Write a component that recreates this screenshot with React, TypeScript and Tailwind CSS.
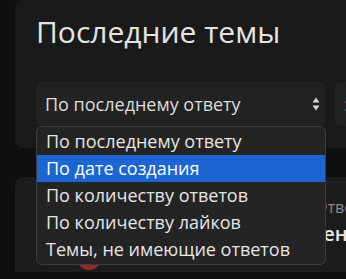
import React from "react"

const options = [
  "По последнему ответу",
  "По дате создания",
  "По количеству ответов",
  "По количеству лайков",
  "Темы, не имеющие ответов",
]

function SortArrows() {
  return (
    <svg width="8" height="14" viewBox="0 0 8 14" className="shrink-0">
      <path d="M4 0.5 L7.5 5.5 H0.5 Z" fill="#d6d6d6" />
      <path d="M4 13.5 L7.5 8.5 H0.5 Z" fill="#d6d6d6" />
    </svg>
  )
}

export default function App() {
  const selected = 1

  return (
    <div
      className="relative h-[279px] w-[346px] overflow-hidden bg-[#0f0f0f] pl-[15px]"
      style={{ fontFamily: '"Open Sans", "Noto Sans", sans-serif' }}
    >
      {/* Header panel */}
      <div className="w-[440px] rounded-lg bg-[#1a1a1a] pb-[22px] pl-[21px] pt-[12px]">
        <h1 className="text-[30px] leading-[40px] text-[#e4e4e4]">Последние темы</h1>
        <div className="mt-[30px] flex gap-[9px]">
          <div className="flex h-[44px] w-[290px] shrink-0 items-center justify-between rounded-md bg-[#222222] pl-[9px] pr-[6px]">
            <span className="text-[18px] text-[#dcdcdc]">По последнему ответу</span>
            <SortArrows />
          </div>
          <div className="flex h-[44px] w-[120px] shrink-0 items-center rounded-md bg-[#222222] pl-[9px]">
            <span className="text-[18px] text-[#4a7fc8]">:</span>
          </div>
        </div>
      </div>

      {/* Topic list panel */}
      <div className="mt-[29px] h-[95px] w-[460px] rounded-t-lg bg-[#1c1c1c] pl-[62px] pt-[19px]">
        <div className="flex">
          <div className="mt-[50px] h-[24px] w-[24px] shrink-0 rounded-full bg-[#8e2b2b]" />
          <div className="flex flex-col pl-[214px]">
            <span className="text-[16px] leading-[22px] text-[#8a8a8a]">Ответов: 3</span>
            <span className="-ml-[69px] pt-[2px] text-[20px] font-semibold leading-[28px] text-[#e8e8e8]">Обновленная тема</span>
          </div>
        </div>
      </div>

      {/* Open dropdown list */}
      <div className="absolute left-[36px] top-[126px] w-[290px] rounded-md border border-[#3d3d3d] bg-[#242424] py-px">
        {options.map((opt, i) => (
          <div
            key={opt}
            className={
              i === selected
                ? "h-[27px] bg-[#1b66d3] pl-[9px] text-[18px] leading-[27px] text-white"
                : "h-[27px] pl-[9px] text-[18px] leading-[27px] text-[#e6e6e6]"
            }
          >
            {opt}
          </div>
        ))}
      </div>
    </div>
  )
}
